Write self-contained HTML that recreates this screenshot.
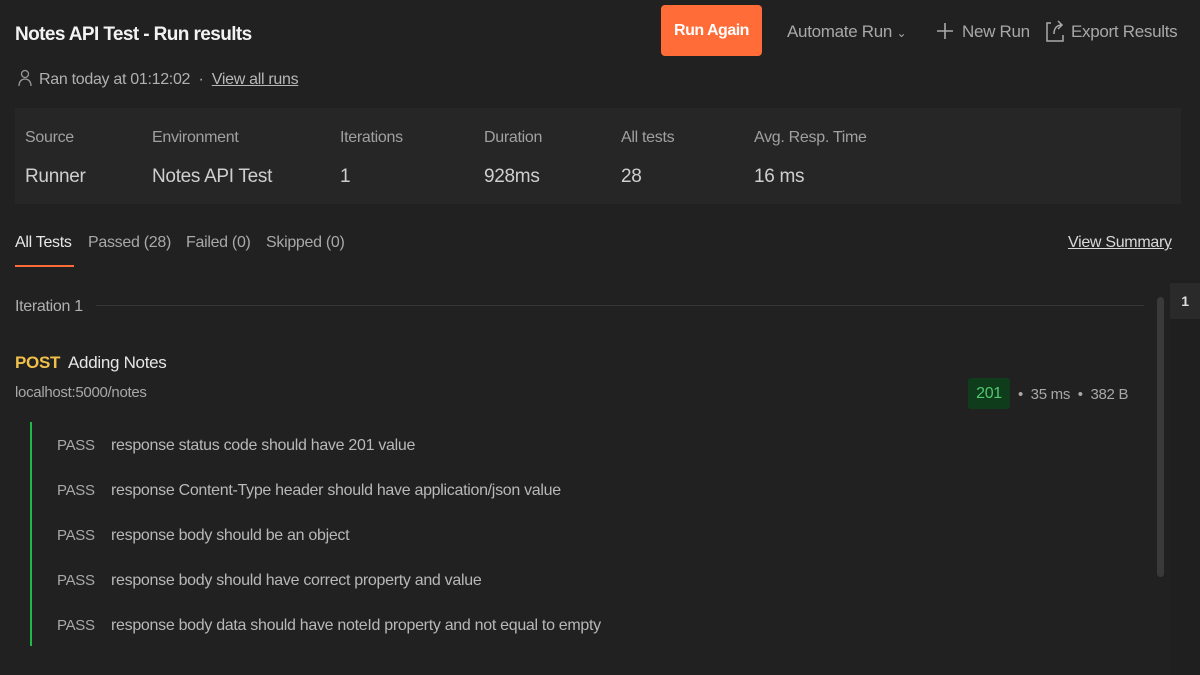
<!DOCTYPE html>
<html><head><meta charset="utf-8"><style>
*{margin:0;padding:0;box-sizing:border-box}
body{width:1200px;height:675px;background:#212121;font-family:"Liberation Sans",sans-serif;color:#c8c8c8;position:relative;overflow:hidden;letter-spacing:-0.3px}
.a{position:absolute;white-space:nowrap}
.title{left:15px;top:24px;font-size:19px;font-weight:bold;color:#f2f2f2;letter-spacing:-0.6px}
.btn{left:661px;top:5px;width:101px;height:51px;background:#ff6c37;border-radius:4px;color:#fff;font-weight:bold;font-size:16px;text-align:center;line-height:51px;letter-spacing:-0.5px}
.gray{color:#a8a8a8;font-size:17px}
.stats{left:15px;top:108px;width:1166px;height:96px;background:#262626}
.lbl{font-size:16px;color:#a0a0a0;top:129px}
.val{font-size:19px;color:#cfcfcf;top:166px}
.tab{top:234px;font-size:16px;color:#a8a8a8}
.pass{font-size:15px;color:#a8a8a8}
.txt{font-size:16px;color:#b8b8b8}
</style></head><body>
<div class="a title">Notes API Test - Run results</div>
<div class="a btn">Run Again</div>
<div class="a gray" style="left:787px;top:22px">Automate Run <span style="font-size:12px">&#8964;</span></div>
<svg class="a" style="left:936px;top:22px" width="18" height="18"><path d="M9 1v16M1 9h16" stroke="#aaa" stroke-width="1.6"/></svg>
<div class="a gray" style="left:962px;top:22px">New Run</div>
<svg class="a" style="left:1045px;top:19px" width="20" height="24"><path d="M6 4H2v18h16v-6M9 15c0-6 3-9 8-9M13 2l4 4-4 4" stroke="#aaa" stroke-width="1.5" fill="none"/></svg>
<div class="a gray" style="left:1071px;top:22px">Export Results</div>
<svg class="a" style="left:17px;top:69px" width="16" height="18"><circle cx="8" cy="5" r="3.5" stroke="#999" stroke-width="1.3" fill="none"/><path d="M2 17c0-5 3-7 6-7s6 2 6 7" stroke="#999" stroke-width="1.3" fill="none"/></svg>
<div class="a" style="left:39px;top:71px;font-size:16px;color:#b0b0b0">Ran today at 01:12:02 &nbsp;· &nbsp;<span style="text-decoration:underline;color:#b8b8b8">View all runs</span></div>
<div class="a stats"></div>
<div class="a lbl" style="left:25px">Source</div>
<div class="a lbl" style="left:152px">Environment</div>
<div class="a lbl" style="left:340px">Iterations</div>
<div class="a lbl" style="left:484px">Duration</div>
<div class="a lbl" style="left:621px">All tests</div>
<div class="a lbl" style="left:754px">Avg. Resp. Time</div>
<div class="a val" style="left:25px">Runner</div>
<div class="a val" style="left:152px">Notes API Test</div>
<div class="a val" style="left:340px">1</div>
<div class="a val" style="left:484px">928ms</div>
<div class="a val" style="left:621px">28</div>
<div class="a val" style="left:754px">16 ms</div>
<div class="a tab" style="left:15px;color:#e8e8e8">All Tests</div>
<div class="a" style="left:15px;top:265px;width:59px;height:2px;background:#ff6c37"></div>
<div class="a tab" style="left:88px">Passed (28)</div>
<div class="a tab" style="left:186px">Failed (0)</div>
<div class="a tab" style="left:266px">Skipped (0)</div>
<div class="a tab" style="left:1068px;color:#d8d8d8;text-decoration:underline">View Summary</div>
<div class="a" style="left:15px;top:298px;font-size:16px;color:#b0b0b0">Iteration 1</div>
<div class="a" style="left:96px;top:305px;width:1048px;height:1px;background:#363636"></div>
<div class="a" style="left:1157px;top:297px;width:7px;height:280px;background:#3a3a3a;border-radius:4px"></div>
<div class="a" style="left:1170px;top:280px;width:30px;height:395px;background:#1f1f1f"></div>
<div class="a" style="left:1170px;top:283px;width:30px;height:36px;background:#2a2a2a;color:#ddd;font-size:14px;font-weight:bold;text-align:center;line-height:36px">1</div>
<div class="a" style="left:15px;top:353px;font-size:17px"><b style="color:#f0c04a">POST</b>&nbsp; <span style="color:#e6e6e6">Adding Notes</span></div>
<div class="a" style="left:15px;top:384px;font-size:15px;color:#a8a8a8">localhost:5000/notes</div>
<div class="a" style="left:968px;top:378px;width:42px;height:31px;background:#0f3d1c;border-radius:3px;color:#4fc86f;font-size:16px;text-align:center;line-height:31px">201</div>
<div class="a" style="left:1018px;top:386px;font-size:15px;color:#a8a8a8">•&nbsp; 35 ms &nbsp;•&nbsp; 382 B</div>
<div class="a" style="left:30px;top:422px;width:2px;height:224px;background:#1fb849"></div>
<div class="a pass" style="left:57px;top:437px">PASS</div><div class="a txt" style="left:111px;top:437px">response status code should have 201 value</div>
<div class="a pass" style="left:57px;top:482px">PASS</div><div class="a txt" style="left:111px;top:482px">response Content-Type header should have application/json value</div>
<div class="a pass" style="left:57px;top:527px">PASS</div><div class="a txt" style="left:111px;top:527px">response body should be an object</div>
<div class="a pass" style="left:57px;top:572px">PASS</div><div class="a txt" style="left:111px;top:572px">response body should have correct property and value</div>
<div class="a pass" style="left:57px;top:617px">PASS</div><div class="a txt" style="left:111px;top:617px">response body data should have noteId property and not equal to empty</div>
</body></html>
